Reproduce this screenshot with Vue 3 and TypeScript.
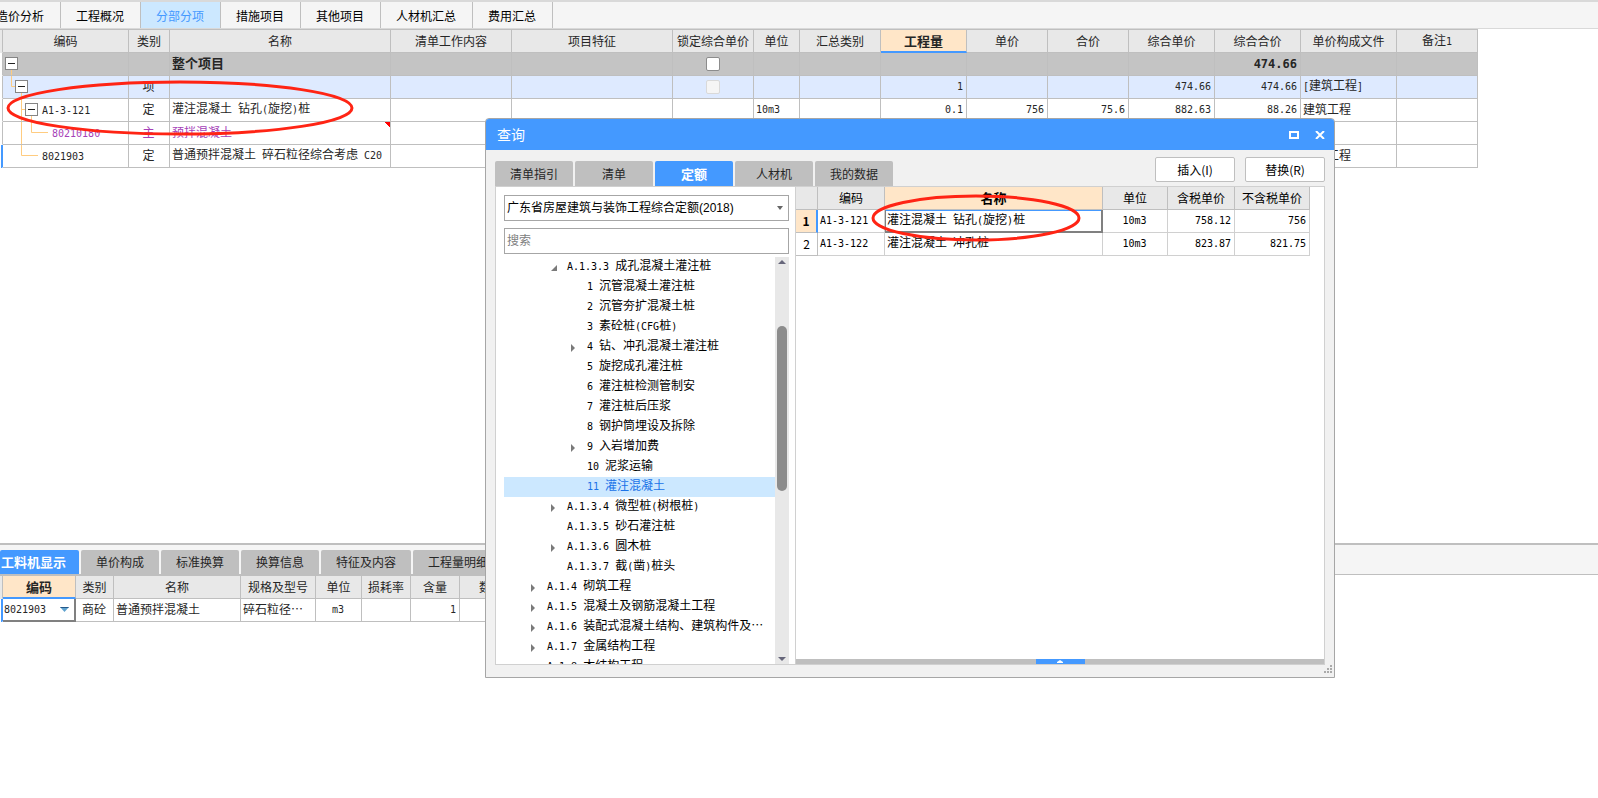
<script setup lang="ts">
import { h, ref } from 'vue'

/* Mixed text: ASCII runs are set in a half-width monospace face. */
const Txt = (props: { v: string }) =>
  (props.v.match(/[\x00-\x7f]+|[^\x00-\x7f]+/g) ?? []).map((run) =>
    h('span', { class: /^[\x00-\x7f]/.test(run) ? 'ascii' : 'han' }, run),
  )
Txt.props = ['v']

const navTabs = ['造价分析', '工程概况', '分部分项', '措施项目', '其他项目', '人材机汇总', '费用汇总']
const activeNav = ref('分部分项')

interface Column { label: string; width: number; align: 'left' | 'center' | 'right' }
const columns: Column[] = [
  { label: '编码', width: 126, align: 'left' },
  { label: '类别', width: 41, align: 'center' },
  { label: '名称', width: 221, align: 'left' },
  { label: '清单工作内容', width: 121, align: 'left' },
  { label: '项目特征', width: 161, align: 'left' },
  { label: '锁定综合单价', width: 81, align: 'center' },
  { label: '单位', width: 46, align: 'left' },
  { label: '汇总类别', width: 81, align: 'left' },
  { label: '工程量', width: 86, align: 'right' },
  { label: '单价', width: 81, align: 'right' },
  { label: '合价', width: 81, align: 'right' },
  { label: '综合单价', width: 86, align: 'right' },
  { label: '综合合价', width: 86, align: 'right' },
  { label: '单价构成文件', width: 96, align: 'left' },
  { label: '备注1', width: 81, align: 'left' },
]

interface Row { kind: string; guide: string; box: number; indent: number; check?: 'on' | 'off'; cells: string[] }
const rows: Row[] = [
  { kind: 'total', guide: 'M8.5 17V22', box: 2, indent: 16, check: 'on',
    cells: ['', '', '整个项目', '', '', '', '', '', '', '', '', '', '474.66', '', ''] },
  { kind: 'section', guide: 'M8.5 0V10.5H12M18.5 17V22', box: 12, indent: 26, check: 'off',
    cells: ['', '项', '', '', '', '', '', '', '1', '', '', '474.66', '474.66', '[建筑工程]', ''] },
  { kind: 'plain', guide: 'M18.5 0V22M18.5 10.5H22M28.5 17V22', box: 22, indent: 39,
    cells: ['A1-3-121', '定', '灌注混凝土 钻孔(旋挖)桩', '', '', '', '10m3', '', '0.1', '756', '75.6', '882.63', '88.26', '建筑工程', ''] },
  { kind: 'material', guide: 'M18.5 0V22M28.5 0V10.5H45', box: -1, indent: 49,
    cells: ['80210180', '主', '预拌混凝土', '', '', '', '', '', '', '', '', '', '', '', ''] },
  { kind: 'current', guide: 'M18.5 0V10.5H35', box: -1, indent: 39,
    cells: ['8021903', '定', '普通预拌混凝土 碎石粒径综合考虑 C20', '', '', '', '', '', '', '', '', '', '', '建筑工程', ''] },
]

const detailTabs = ['工料机显示', '单价构成', '标准换算', '换算信息', '特征及内容', '工程量明细']
const activeDetail = ref('工料机显示')
const detailColumns: Column[] = [
  { label: '编码', width: 73, align: 'left' },
  { label: '类别', width: 38, align: 'center' },
  { label: '名称', width: 127, align: 'left' },
  { label: '规格及型号', width: 75, align: 'left' },
  { label: '单位', width: 46, align: 'center' },
  { label: '损耗率', width: 49, align: 'right' },
  { label: '含量', width: 49, align: 'right' },
  { label: '数量', width: 63, align: 'right' },
]
const detailCells = ['8021903', '商砼', '普通预拌混凝土', '碎石粒径…', 'm3', '', '1', '']

const queryTabs = ['清单指引', '清单', '定额', '人材机', '我的数据']
const activeQuery = ref('定额')
const library = '广东省房屋建筑与装饰工程综合定额(2018)'
const keyword = ref('')

interface Node { text: string; level: 1 | 2 | 3; mark?: 'open' | 'closed' }
const tree: Node[] = [
  { text: 'A.1.3.3 成孔混凝土灌注桩', level: 2, mark: 'open' },
  { text: '1 沉管混凝土灌注桩', level: 3 },
  { text: '2 沉管夯扩混凝土桩', level: 3 },
  { text: '3 素砼桩(CFG桩)', level: 3 },
  { text: '4 钻、冲孔混凝土灌注桩', level: 3, mark: 'closed' },
  { text: '5 旋挖成孔灌注桩', level: 3 },
  { text: '6 灌注桩检测管制安', level: 3 },
  { text: '7 灌注桩后压浆', level: 3 },
  { text: '8 钢护筒埋设及拆除', level: 3 },
  { text: '9 入岩增加费', level: 3, mark: 'closed' },
  { text: '10 泥浆运输', level: 3 },
  { text: '11 灌注混凝土', level: 3 },
  { text: 'A.1.3.4 微型桩(树根桩)', level: 2, mark: 'closed' },
  { text: 'A.1.3.5 砂石灌注桩', level: 2 },
  { text: 'A.1.3.6 圆木桩', level: 2, mark: 'closed' },
  { text: 'A.1.3.7 截(凿)桩头', level: 2 },
  { text: 'A.1.4 砌筑工程', level: 1, mark: 'closed' },
  { text: 'A.1.5 混凝土及钢筋混凝土工程', level: 1, mark: 'closed' },
  { text: 'A.1.6 装配式混凝土结构、建筑构件及…', level: 1, mark: 'closed' },
  { text: 'A.1.7 金属结构工程', level: 1, mark: 'closed' },
  { text: 'A.1.8 木结构工程', level: 1 },
]
const selectedNode = ref('11 灌注混凝土')

const resultColumns: Column[] = [
  { label: '编码', width: 67, align: 'left' },
  { label: '名称', width: 218, align: 'left' },
  { label: '单位', width: 65, align: 'center' },
  { label: '含税单价', width: 67, align: 'right' },
  { label: '不含税单价', width: 75, align: 'right' },
]
const results = [
  ['A1-3-121', '灌注混凝土 钻孔(旋挖)桩', '10m3', '758.12', '756'],
  ['A1-3-122', '灌注混凝土 冲孔桩', '10m3', '823.87', '821.75'],
]
</script>

<template>
  <div class="app">
    <nav class="nav">
      <button v-for="t in navTabs" :key="t" type="button" :class="{ active: t === activeNav }" @click="activeNav = t">{{ t }}</button>
    </nav>

    <main class="sheet">
      <table class="grid main-grid">
        <colgroup>
          <col class="gutter-col" />
          <col v-for="c in columns" :key="c.label" :style="{ width: c.width + 'px' }" />
        </colgroup>
        <thead>
          <tr>
            <th class="gutter"></th>
            <th v-for="c in columns" :key="c.label" :class="{ focus: c.label === '工程量' }"><Txt :v="c.label" /></th>
          </tr>
        </thead>
        <tbody>
          <tr v-for="(r, ri) in rows" :key="ri" :class="r.kind">
            <td class="gutter"></td>
            <td v-for="(cell, ci) in r.cells" :key="ci" :class="[columns[ci].align, { code: ci === 0, check: ci === 5, flagged: ri === 3 && ci === 2 }]">
              <div v-if="ci === 0" class="branch">
                <svg :width="r.indent" height="22" aria-hidden="true">
                  <path :d="r.guide" fill="none" stroke="#ffcc80" />
                  <g v-if="r.box >= 0" :transform="`translate(${r.box} 4)`">
                    <rect x="0.5" y="0.5" width="12" height="12" fill="#fff" stroke="#858585" />
                    <path d="M3 6.5H10" stroke="#222" />
                  </g>
                </svg>
                <span><Txt :v="cell" /></span>
              </div>
              <input v-else-if="ci === 5 && r.check" type="checkbox" aria-label="锁定综合单价" :disabled="r.check === 'off'" />
              <Txt v-else :v="cell" />
            </td>
          </tr>
        </tbody>
      </table>
    </main>

    <section class="detail">
      <div class="detail-tabs">
        <button v-for="t in detailTabs" :key="t" type="button" :class="{ active: t === activeDetail }" @click="activeDetail = t">{{ t }}</button>
      </div>
      <table class="grid detail-grid">
        <colgroup>
          <col class="gutter-col" />
          <col v-for="c in detailColumns" :key="c.label" :style="{ width: c.width + 'px' }" />
        </colgroup>
        <thead>
          <tr>
            <th class="gutter"></th>
            <th v-for="(c, i) in detailColumns" :key="c.label" :class="{ focus: i === 0 }">{{ c.label }}</th>
          </tr>
        </thead>
        <tbody>
          <tr class="current">
            <td class="gutter"></td>
            <td v-for="(cell, i) in detailCells" :key="i" :class="[detailColumns[i].align, { editing: i === 0 }]">
              <div v-if="i === 0" class="picker">
                <select aria-label="编码"><option>{{ cell }}</option></select>
                <svg width="9" height="5" aria-hidden="true"><path d="M0 0H9L4.5 5Z" fill="#5fa3cf" /><path d="M0 0H9L8 1H1Z" fill="#24588a" /></svg>
              </div>
              <Txt v-else :v="cell" />
            </td>
          </tr>
        </tbody>
      </table>
    </section>

    <div class="dialog" role="dialog" aria-labelledby="query-title">
      <header class="title-bar">
        <h1 id="query-title">查询</h1>
        <button type="button" aria-label="最大化"><svg width="10" height="8"><rect x="1" y="1" width="8" height="6" fill="none" stroke="#fff" stroke-width="2" /></svg></button>
        <button type="button" aria-label="关闭"><svg width="10" height="8"><path d="M1 0L9 8M9 0L1 8" stroke="#fff" stroke-width="2" /></svg></button>
      </header>

      <div class="toolbar">
        <div class="query-tabs">
          <button v-for="t in queryTabs" :key="t" type="button" :class="{ active: t === activeQuery }" @click="activeQuery = t">{{ t }}</button>
        </div>
        <div class="actions">
          <button type="button">插入(I)</button>
          <button type="button">替换(R)</button>
        </div>
      </div>

      <div class="panes">
        <div class="catalog">
          <div class="field">
            <select aria-label="定额库"><option>{{ library }}</option></select>
            <svg width="6" height="4" aria-hidden="true"><path d="M0 0H6L3 4Z" fill="#666" /></svg>
          </div>
          <div class="field"><input v-model="keyword" type="text" placeholder="搜索" aria-label="搜索" /></div>
          <div class="tree-box">
            <ul class="tree">
              <li v-for="n in tree" :key="n.text" :class="['level-' + n.level, { selected: n.text === selectedNode }]" @click="selectedNode = n.text">
                <svg width="16" height="20" aria-hidden="true">
                  <path v-if="n.mark === 'open'" d="M6 8V14H0Z" fill="#7a7a7a" />
                  <path v-if="n.mark === 'closed'" d="M0 7L4 11L0 15Z" fill="#7a7a7a" />
                </svg>
                <span><Txt :v="n.text" /></span>
              </li>
            </ul>
            <div class="scroll" aria-hidden="true">
              <svg width="8" height="4"><path d="M0 4L4 0L8 4Z" fill="#66667a" /></svg>
              <div class="track"><div class="thumb"></div></div>
              <svg width="8" height="4"><path d="M0 0H8L4 4Z" fill="#66667a" /></svg>
            </div>
          </div>
        </div>

        <div class="results">
          <table class="grid result-grid">
            <colgroup>
              <col class="number-col" />
              <col v-for="c in resultColumns" :key="c.label" :style="{ width: c.width + 'px' }" />
            </colgroup>
            <thead>
              <tr>
                <th></th>
                <th v-for="(c, i) in resultColumns" :key="c.label" :class="{ focus: i === 1 }">{{ c.label }}</th>
              </tr>
            </thead>
            <tbody>
              <tr v-for="(r, ri) in results" :key="ri" :class="{ picked: ri === 0 }">
                <th scope="row">{{ ri + 1 }}</th>
                <td v-for="(cell, ci) in r" :key="ci" :class="[resultColumns[ci].align, { cursor: ri === 0 && ci === 1 }]"><Txt :v="cell" /></td>
              </tr>
            </tbody>
          </table>
          <div class="splitter">
            <button type="button" aria-label="展开"><svg width="6" height="5"><path d="M0 4V3L3 1L6 3V4Z" fill="#fff" /></svg></button>
          </div>
        </div>
      </div>

      <footer class="grip">
        <svg width="9" height="9" aria-hidden="true">
          <path d="M7 1H9M4 4H6M7 4H9M1 7H3M4 7H6M7 7H9" stroke="#aaa" stroke-width="2" />
        </svg>
      </footer>
    </div>

    <svg class="mark mark-row" width="350" height="58" aria-hidden="true"><ellipse cx="175" cy="29" rx="172" ry="26" /></svg>
    <svg class="mark mark-result" width="212" height="50" aria-hidden="true"><ellipse cx="106" cy="25" rx="103" ry="22" /></svg>
  </div>
</template>

<style>
body {
  margin: 0;
  background: #fff;
}
.ascii {
  font-family: "DejaVu Sans Mono", monospace;
  font-size: 10px;
}
.total .ascii {
  font-size: 12px;
}
</style>

<style scoped>
.app {
  position: relative;
  display: flex;
  flex-direction: column;
  min-height: 100vh;
  overflow: hidden;
  font: 12px/20px "Noto Sans CJK SC", "Liberation Sans", sans-serif;
  color: #262626;
}
button, input, select {
  margin: 0;
  padding: 0;
  border: 0;
  border-radius: 0;
  font: inherit;
  color: inherit;
  background: none;
}
select, input[type="checkbox"] {
  appearance: none;
}

.nav {
  display: flex;
  height: 26px;
  border-top: 2px solid #d9d9d9;
  border-bottom: 1px solid #d9d9d9;
  background: #f5f5f5;
}
.nav button {
  flex: none;
  padding: 1px 16px 0 15px;
  border-right: 1px solid #bfbfbf;
  color: #000;
  white-space: nowrap;
}
.nav button:first-child {
  display: flex;
  align-items: center;
  justify-content: flex-end;
  width: 61px;
  padding-left: 0;
}
.nav button.active {
  background: #cce8ff;
  color: #4499ff;
}

.sheet {
  flex: none;
  height: 514px;
  overflow: hidden;
}
.grid {
  table-layout: fixed;
  width: 0;
  border-collapse: separate;
  border-spacing: 0;
  white-space: pre;
}
.main-grid, .detail-grid {
  border-top: 1px solid #bfbfbf;
}
.gutter-col {
  width: 3px;
}
.number-col {
  width: 22px;
}
.grid th, .grid td {
  box-sizing: border-box;
  height: 23px;
  padding: 0 3px 2px 2px;
  border: 0 solid #bfbfbf;
  border-width: 0 1px 1px 0;
  line-height: 16px;
  overflow: hidden;
}
.grid th {
  padding: 0;
  background: #e8e8e8;
  font-weight: 400;
  text-align: center;
}
.grid .gutter {
  padding: 0;
  border-bottom-color: transparent;
}
.grid th.focus {
  background: #ffe6c8;
  font-size: 13px;
  font-weight: 700;
}
.main-grid th.focus {
  border-bottom: 2px solid #4499ff;
}
.grid .left { text-align: left; }
.grid .center { text-align: center; }
.grid .right { text-align: right; }
.grid .code, .grid .check { padding: 0; }

.branch {
  display: flex;
  align-items: center;
  height: 22px;
}
.branch svg { flex: none; }
.branch span { padding-bottom: 1px; }
.total td:not(.gutter) {
  background: #c4c4c4;
  font-size: 13px;
  font-weight: 700;
}
.section td:not(.gutter) { background: #deeaff; }
.material td { color: #a63fb8; }
.current .gutter {
  border-right-color: #4499ff;
  background: linear-gradient(90deg, transparent 50%, #4499ff 50%);
}
.flagged {
  background: linear-gradient(225deg, #ff0000 4px, transparent 4px);
}
input[type="checkbox"] {
  display: block;
  box-sizing: border-box;
  width: 14px;
  height: 14px;
  margin: 0 auto;
  border: 1px solid #8c8c8c;
  border-radius: 2px;
  background: #fff;
}
input[type="checkbox"]:disabled {
  border-color: #d9d9d9;
  background: #f5f5f5;
}

.detail {
  flex: 1;
  border-top: 2px solid #bfbfbf;
}
.detail-tabs {
  display: flex;
  gap: 2px;
  height: 24px;
  padding-top: 5px;
  border-bottom: 1px solid #bfbfbf;
  background: #f5f5f5;
}
.detail-tabs button, .query-tabs button {
  flex: none;
  min-width: 78px;
  padding: 0 15px;
  border-radius: 2px 2px 0 0;
  background: #bfbfbf;
}
.detail-tabs button:first-child {
  padding: 0 13px 0 1px;
}
.detail-tabs button.active, .query-tabs button.active {
  background: #4499ff;
  color: #fff;
  font-size: 13px;
  font-weight: 700;
}
.detail .grid th.focus {
  border-bottom: 2px solid #4499ff;
}
.grid .editing {
  padding: 0;
  border-right: 2px solid #808080;
  border-bottom: 2px solid #808080;
}
.picker {
  display: flex;
  align-items: center;
  padding-right: 5px;
}
.picker svg { flex: none; }
.picker select {
  flex: 1;
  min-width: 0;
  padding-left: 1px;
  font: 10px/20px "DejaVu Sans Mono", monospace;
}

.dialog {
  position: absolute;
  top: 118px;
  left: 485px;
  display: flex;
  flex-direction: column;
  box-sizing: border-box;
  width: 850px;
  height: 560px;
  border: 1px solid #a6a6a6;
  border-radius: 4px 4px 0 0;
  background: #f1f1f1;
  color: #000;
  overflow: hidden;
}
.title-bar {
  display: flex;
  align-items: center;
  gap: 16px;
  height: 31px;
  padding: 0 9px 0 11px;
  background: #4499ff;
  color: #fff;
}
.title-bar h1 {
  flex: 1;
  margin: 0;
  padding-bottom: 2px;
  font-size: 14px;
  font-weight: 400;
}
.title-bar button {
  display: flex;
}
.toolbar {
  display: flex;
  justify-content: space-between;
  height: 36px;
  padding: 0 9px;
}
.query-tabs {
  display: flex;
  gap: 2px;
  height: 25px;
  padding-top: 11px;
  color: #262626;
}
.query-tabs button {
  padding: 0;
}
.actions {
  display: flex;
  gap: 10px;
  height: 25px;
  padding-top: 7px;
}
.actions button {
  box-sizing: border-box;
  width: 80px;
  border: 1px solid #bfbfbf;
  border-radius: 2px;
  background: #fff;
}
.panes {
  display: flex;
  flex: 1;
  min-height: 0;
  margin: 0 9px;
  border: 1px solid #d0d0d0;
  background: #fff;
}
.catalog {
  display: flex;
  flex-direction: column;
  box-sizing: border-box;
  width: 300px;
  padding: 8px 6px 0 8px;
  border-right: 1px solid #d0d0d0;
}
.field {
  display: flex;
  align-items: center;
  box-sizing: border-box;
  height: 26px;
  margin-bottom: 7px;
  padding-right: 5px;
  border: 1px solid #a6a6a6;
}
.field + .field {
  margin-bottom: 3px;
}
.field select, .field input {
  flex: 1;
  min-width: 0;
  padding-left: 2px;
  font-family: "Liberation Sans", "Noto Sans CJK SC", sans-serif;
}
.field input::placeholder {
  color: #808080;
  opacity: 1;
}
.tree-box {
  display: flex;
  flex: 1;
  min-height: 0;
}
.tree {
  flex: 1;
  margin: 0;
  padding: 0;
  overflow: hidden;
  line-height: 16px;
  list-style: none;
  white-space: pre;
}
.tree li {
  display: flex;
  height: 20px;
}
.tree svg { flex: none; }
.tree .level-1 { padding-left: 27px; }
.tree .level-2 { padding-left: 47px; }
.tree .level-3 { padding-left: 67px; }
.tree .selected {
  background: #cce8ff;
  color: #1a73e8;
}
.scroll {
  display: flex;
  flex-direction: column;
  align-items: center;
  width: 14px;
  padding: 3px 0;
  background: #e8e8e8;
}
.track {
  flex: 1;
  width: 10px;
  padding-top: 62px;
}
.thumb {
  height: 165px;
  border-radius: 5px;
  background: #8c8c8c;
}

.results {
  display: flex;
  flex: 1;
  flex-direction: column;
  justify-content: space-between;
}
.result-grid {
  color: #000;
}
.result-grid th, .result-grid thead th.focus {
  border-bottom-color: #bfbfbf;
}
.result-grid td {
  border-color: #d0d0d0;
}
.result-grid .picked th {
  background: #ffe6c8;
  font-weight: 700;
  border-right: 2px solid #4499ff;
}
.result-grid tbody tr:not(.picked) th {
  background: #fff;
}
.grid td.cursor {
  padding-bottom: 1px;
  box-shadow: inset 1px 0 #808080, inset 0 1px #4499ff;
  border-right: 2px solid #808080;
  border-bottom: 2px solid #808080;
}
.splitter {
  display: flex;
  justify-content: center;
  height: 5px;
  background: #bfbfbf;
}
.splitter button {
  display: flex;
  justify-content: center;
  width: 49px;
  background: #4499ff;
}
.grip {
  display: flex;
  justify-content: flex-end;
  align-items: flex-start;
  height: 12px;
  padding-right: 2px;
}

.mark {
  position: absolute;
  fill: none;
  stroke: #ff2414;
  stroke-width: 3px;
  pointer-events: none;
}
.mark-row {
  top: 79px;
  left: 5px;
}
.mark-result {
  top: 193px;
  left: 870px;
}
</style>
